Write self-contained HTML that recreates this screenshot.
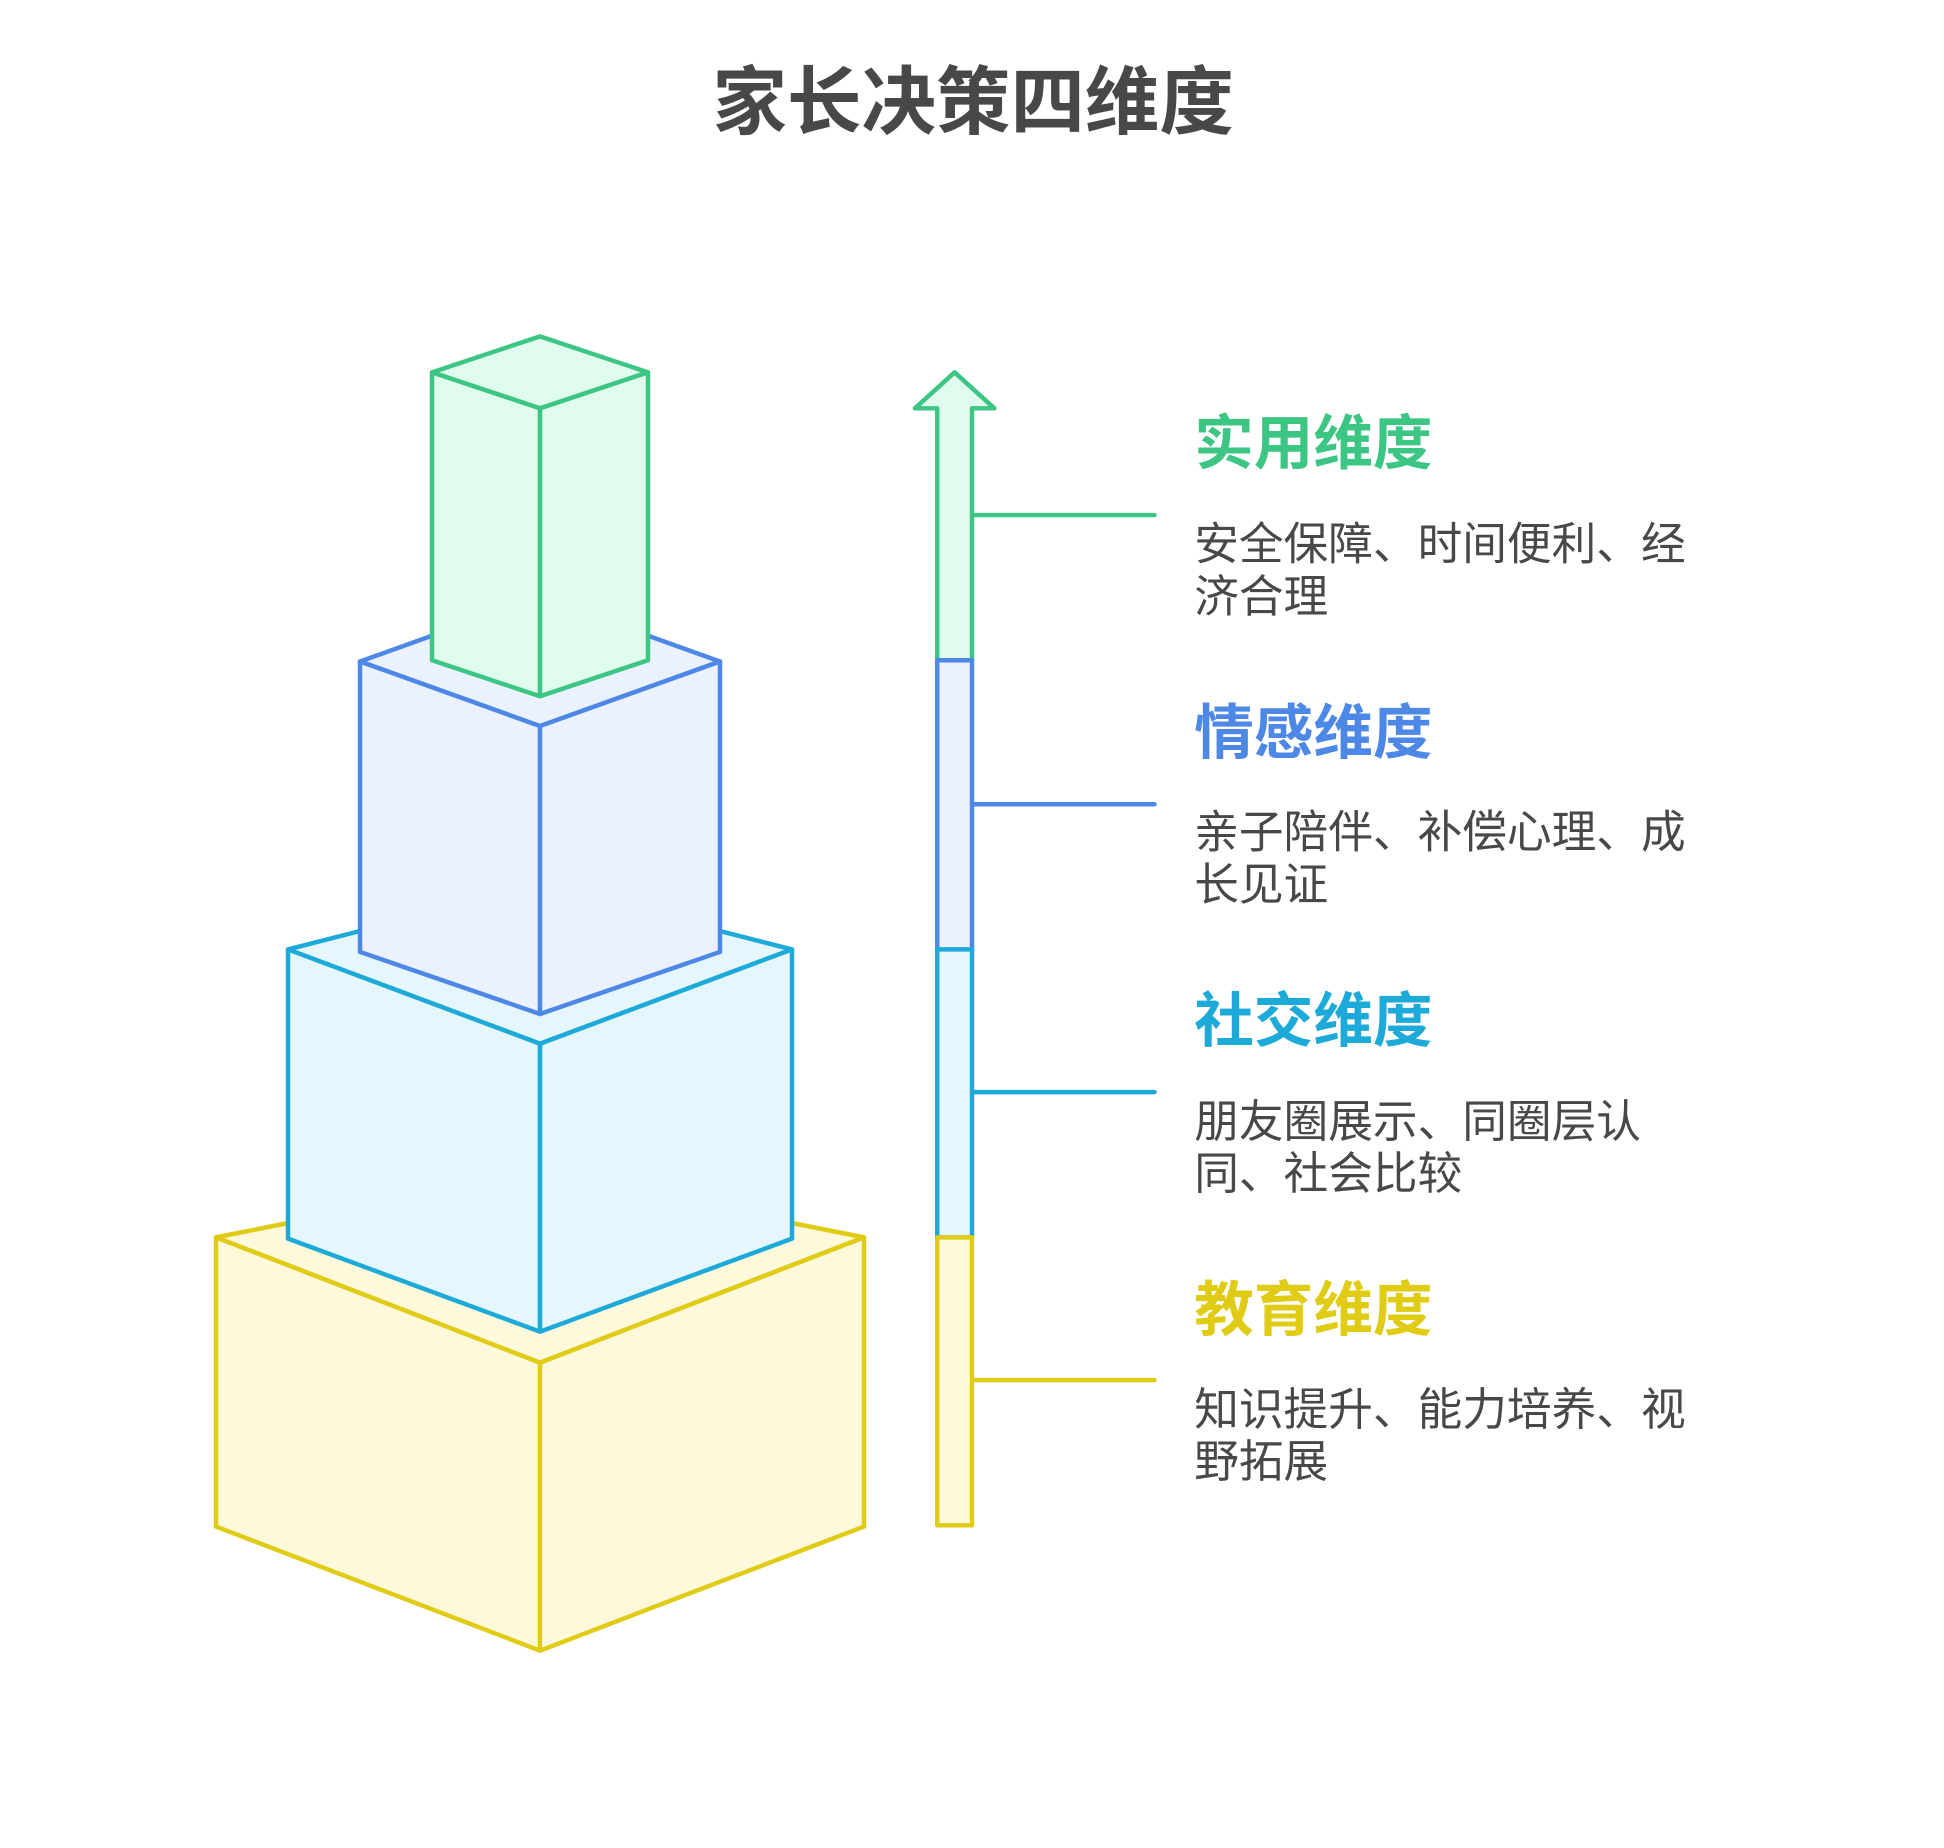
<!DOCTYPE html>
<html><head><meta charset="utf-8"><style>
html,body{margin:0;padding:0;background:#fff;}
svg{display:block;}
text{font-family:"Liberation Sans","Noto Sans CJK SC",sans-serif;}
</style></head><body>
<svg width="1944" height="1848" viewBox="0 0 1566 1489" preserveAspectRatio="none" xmlns="http://www.w3.org/2000/svg">
<rect width="1566" height="1489" fill="#fff"/>
<text x="784" y="103" text-anchor="middle" font-size="60" font-weight="bold" fill="#484848">家长决策四维度</text>
<g stroke-width="3.6" stroke-linejoin="round" stroke-linecap="round">
<g stroke="#e0cb15" fill="#fef9db">
<polygon points="435,945 174,997 435,1098 696,997"/>
<polygon points="174,997 435,1098 435,1330 174,1230"/>
<polygon points="696,997 435,1098 435,1330 696,1230"/>
</g>
<g stroke="#1eaad9" fill="#e5f7fd">
<polygon points="435,713 232,765 435,841 638,765"/>
<polygon points="232,765 435,841 435,1073 232,998"/>
<polygon points="638,765 435,841 435,1073 638,998"/>
</g>
<g stroke="#4e88e7" fill="#ebf2fe">
<polygon points="435,481 290,533 435,585 580,533"/>
<polygon points="290,533 435,585 435,817 290,767"/>
<polygon points="580,533 435,585 435,817 580,767"/>
</g>
<g stroke="#3cc583" fill="#e0fcef">
<polygon points="435,271 348,300 435,329 522,300"/>
<polygon points="348,300 435,329 435,561 348,532"/>
<polygon points="522,300 435,329 435,561 522,532"/>
</g>
<polygon points="755,532 755,329 737,329 769,300 801,329 783,329 783,532" stroke="#3cc583" fill="#e0fcef"/>
<rect x="755" y="532" width="28" height="233" stroke="#4e88e7" fill="#ebf2fe"/>
<rect x="755" y="765" width="28" height="232" stroke="#1eaad9" fill="#e5f7fd"/>
<rect x="755" y="997" width="28" height="232" stroke="#e0cb15" fill="#fef9db"/>
<line x1="785" y1="415" x2="930" y2="415" stroke="#3cc583"/>
<line x1="785" y1="648" x2="930" y2="648" stroke="#4e88e7"/>
<line x1="785" y1="880" x2="930" y2="880" stroke="#1eaad9"/>
<line x1="785" y1="1112" x2="930" y2="1112" stroke="#e0cb15"/>
</g>
<g font-size="36" fill="#484848">
<text x="962" y="374" font-size="48" font-weight="bold" fill="#3cc583">实用维度</text>
<text x="962" y="451">安全保障、时间便利、经</text>
<text x="962" y="493">济合理</text>
<text x="962" y="607" font-size="48" font-weight="bold" fill="#4e88e7">情感维度</text>
<text x="962" y="683">亲子陪伴、补偿心理、成</text>
<text x="962" y="725">长见证</text>
<text x="962" y="839" font-size="48" font-weight="bold" fill="#1eaad9">社交维度</text>
<text x="962" y="916">朋友圈展示、同圈层认</text>
<text x="962" y="958">同、社会比较</text>
<text x="962" y="1072" font-size="48" font-weight="bold" fill="#e0cb15">教育维度</text>
<text x="962" y="1148">知识提升、能力培养、视</text>
<text x="962" y="1190">野拓展</text>
</g>
</svg>
</body></html>
